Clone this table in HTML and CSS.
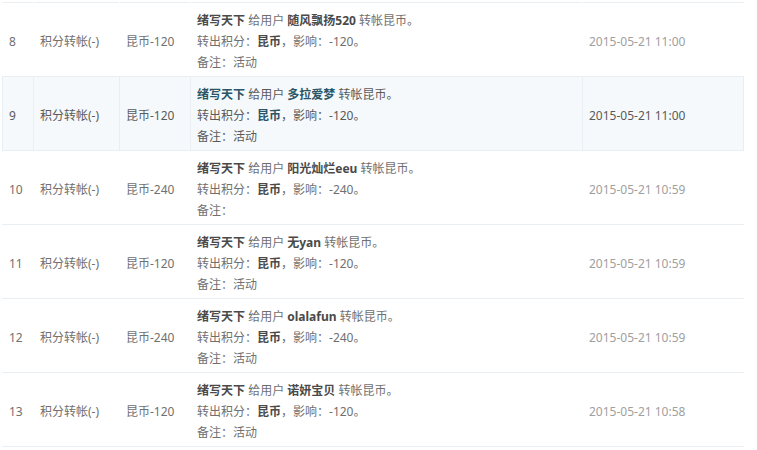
FILE: index.html
```html
<!DOCTYPE html>
<html>
<head>
  <meta charset="utf-8">
  <title>积分记录</title>
  <link rel="stylesheet" href="styles.css">
</head>
<body>
  <div class="wrap">
    <table class="log">
      <colgroup>
        <col class="c-no"><col class="c-type"><col class="c-amount"><col class="c-desc"><col class="c-time">
      </colgroup>
      <tr>
        <td>8</td><td>积分转帐(-)</td><td>昆币-120</td>
        <td><b>绪写天下</b> 给用户 <b>随风飘扬520</b> 转帐昆币。<br>转出积分：<b>昆币</b>，影响：-120。<br>备注：活动</td>
        <td class="time">2015-05-21 11:00</td>
      </tr>
      <tr class="hover">
        <td>9</td><td>积分转帐(-)</td><td>昆币-120</td>
        <td><b>绪写天下</b> 给用户 <b>多拉爱梦</b> 转帐昆币。<br>转出积分：<b>昆币</b>，影响：-120。<br>备注：活动</td>
        <td class="time">2015-05-21 11:00</td>
      </tr>
      <tr>
        <td>10</td><td>积分转帐(-)</td><td>昆币-240</td>
        <td><b>绪写天下</b> 给用户 <b>阳光灿烂eeu</b> 转帐昆币。<br>转出积分：<b>昆币</b>，影响：-240。<br>备注：</td>
        <td class="time">2015-05-21 10:59</td>
      </tr>
      <tr>
        <td>11</td><td>积分转帐(-)</td><td>昆币-120</td>
        <td><b>绪写天下</b> 给用户 <b>无yan</b> 转帐昆币。<br>转出积分：<b>昆币</b>，影响：-120。<br>备注：活动</td>
        <td class="time">2015-05-21 10:59</td>
      </tr>
      <tr>
        <td>12</td><td>积分转帐(-)</td><td>昆币-240</td>
        <td><b>绪写天下</b> 给用户 <b>olalafun</b> 转帐昆币。<br>转出积分：<b>昆币</b>，影响：-240。<br>备注：活动</td>
        <td class="time">2015-05-21 10:59</td>
      </tr>
      <tr>
        <td>13</td><td>积分转帐(-)</td><td>昆币-120</td>
        <td><b>绪写天下</b> 给用户 <b>诺妍宝贝</b> 转帐昆币。<br>转出积分：<b>昆币</b>，影响：-120。<br>备注：活动</td>
        <td class="time">2015-05-21 10:58</td>
      </tr>
    </table>
  </div>
</body>
</html>
```

FILE: styles.css
```css
body {
  margin: 0;
  background: #fff;
  font-family: "Noto Sans", "Noto Sans CJK SC", sans-serif;
  font-size: 12px;
  color: #707070;
}

.wrap {
  padding: 2px 0 0 2px;
}

.log {
  width: 741px;
  border-collapse: collapse;
  table-layout: fixed;
  border-top: 1px solid #e9eef2;
}

.c-no { width: 31px; }
.c-type { width: 86px; }
.c-amount { width: 71px; }
.c-desc { width: 392px; }
.c-time { width: 161px; }

.log td {
  padding: 7px 6px 3px 6px;
  line-height: 21px;
  height: 63px;
  vertical-align: middle;
  border-bottom: 1px solid #e9eef2;
  border-left: 1px solid transparent;
  white-space: nowrap;
}

.log b {
  color: #4a4a4a;
}

.log .time {
  color: #a0a0a0;
}

.log tr.hover td {
  background: #f5f9fc;
  border-left: 1px solid #e8eef3;
  color: #5a5a5a;
}

.log tr.hover td:last-child {
  border-right: 1px solid #e8eef3;
}

.log tr.hover b {
  color: #2a5566;
}

.log tr.hover .time {
  color: #5a5a5a;
}
```
